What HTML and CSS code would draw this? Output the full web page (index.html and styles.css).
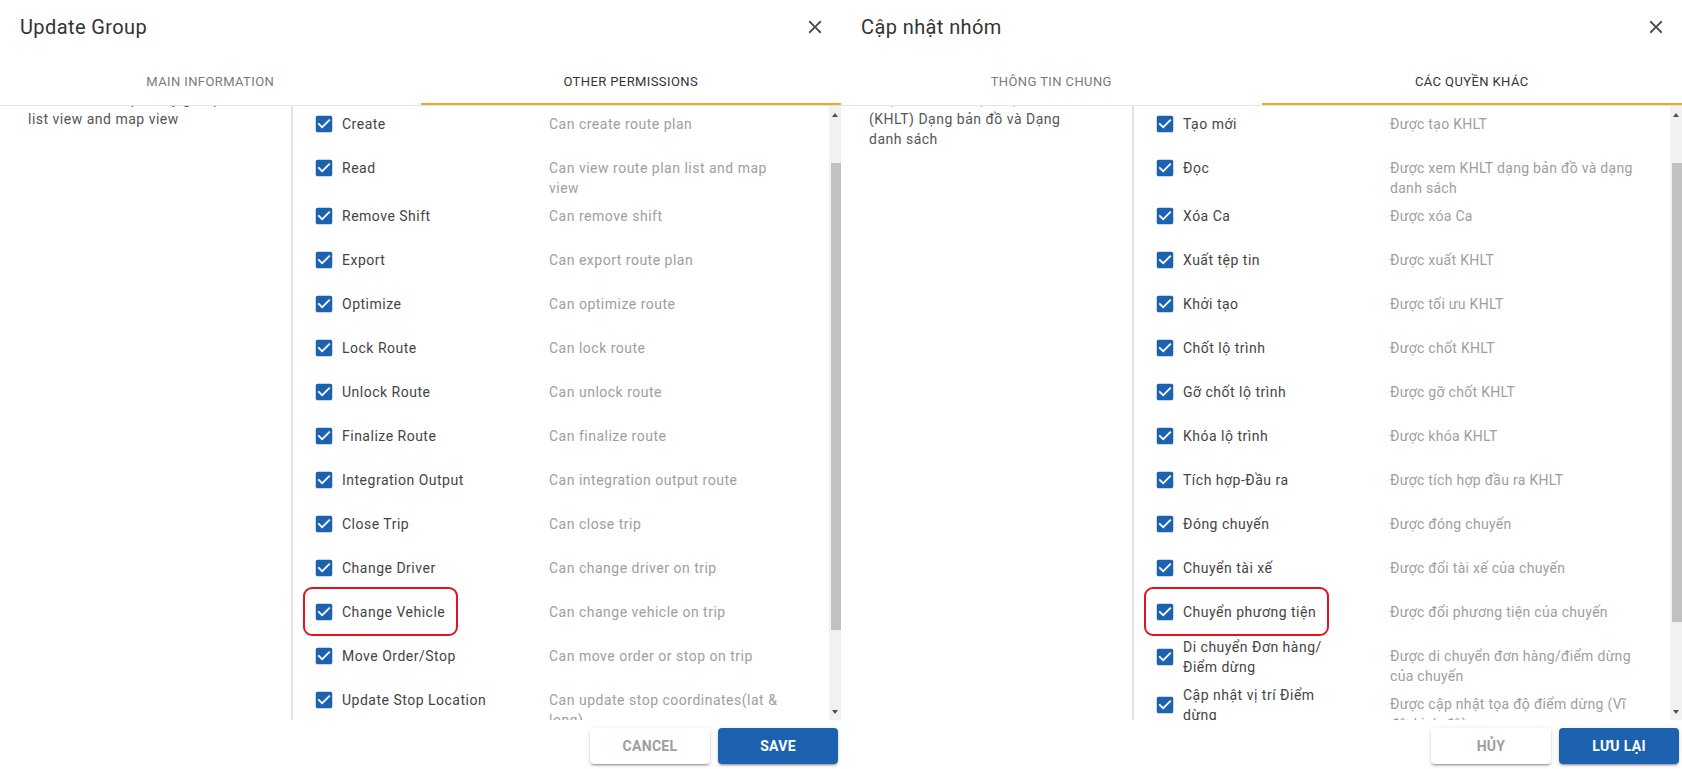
FILE: index.html
```html
<!DOCTYPE html>
<html lang="en">
<head>
<meta charset="utf-8">
<title>Update Group</title>
<link rel="stylesheet" href="styles.css">
</head>
<body>
<svg class="defs" width="0" height="0" aria-hidden="true">
  <symbol id="cb" viewBox="0 0 24 24"><path fill="currentColor" d="M19 3H5c-1.11 0-2 .9-2 2v14c0 1.1.89 2 2 2h14c1.11 0 2-.9 2-2V5c0-1.1-.89-2-2-2zm-9 14l-5-5 1.41-1.41L10 14.17l7.59-7.59L19 8l-9 9z"/></symbol>
  <symbol id="close" viewBox="0 0 24 24"><path fill="currentColor" d="M19 6.41 17.59 5 12 10.59 6.41 5 5 6.41 10.59 12 5 17.59 6.41 19 12 13.41 17.59 19 19 17.59 13.41 12z"/></symbol>
</svg>
<div class="screen">
  <section class="dialog">
    <header class="dialog-header">
      <h2 class="dialog-title">Update Group</h2>
      <button class="close-btn" type="button"><svg class="close-icon"><use href="#close"/></svg></button>
    </header>
    <nav class="tabs">
      <div class="tab">MAIN INFORMATION</div>
      <div class="tab tab--active">OTHER PERMISSIONS</div>
    </nav>
    <div class="dialog-body">
      <aside class="group-desc"><p>Can view route plan by group in list view and map view</p></aside>
      <div class="perm-list">
        <div class="perm-row"><div class="perm-label"><span class="check-label"><svg class="cb"><use href="#cb"/></svg><span class="perm-name">Create</span></span></div><div class="perm-desc">Can create route plan</div></div>
        <div class="perm-row"><div class="perm-label"><span class="check-label"><svg class="cb"><use href="#cb"/></svg><span class="perm-name">Read</span></span></div><div class="perm-desc">Can view route plan list and map view</div></div>
        <div class="perm-row"><div class="perm-label"><span class="check-label"><svg class="cb"><use href="#cb"/></svg><span class="perm-name">Remove Shift</span></span></div><div class="perm-desc">Can remove shift</div></div>
        <div class="perm-row"><div class="perm-label"><span class="check-label"><svg class="cb"><use href="#cb"/></svg><span class="perm-name">Export</span></span></div><div class="perm-desc">Can export route plan</div></div>
        <div class="perm-row"><div class="perm-label"><span class="check-label"><svg class="cb"><use href="#cb"/></svg><span class="perm-name">Optimize</span></span></div><div class="perm-desc">Can optimize route</div></div>
        <div class="perm-row"><div class="perm-label"><span class="check-label"><svg class="cb"><use href="#cb"/></svg><span class="perm-name">Lock Route</span></span></div><div class="perm-desc">Can lock route</div></div>
        <div class="perm-row"><div class="perm-label"><span class="check-label"><svg class="cb"><use href="#cb"/></svg><span class="perm-name">Unlock Route</span></span></div><div class="perm-desc">Can unlock route</div></div>
        <div class="perm-row"><div class="perm-label"><span class="check-label"><svg class="cb"><use href="#cb"/></svg><span class="perm-name">Finalize Route</span></span></div><div class="perm-desc">Can finalize route</div></div>
        <div class="perm-row"><div class="perm-label"><span class="check-label"><svg class="cb"><use href="#cb"/></svg><span class="perm-name">Integration Output</span></span></div><div class="perm-desc">Can integration output route</div></div>
        <div class="perm-row"><div class="perm-label"><span class="check-label"><svg class="cb"><use href="#cb"/></svg><span class="perm-name">Close Trip</span></span></div><div class="perm-desc">Can close trip</div></div>
        <div class="perm-row"><div class="perm-label"><span class="check-label"><svg class="cb"><use href="#cb"/></svg><span class="perm-name">Change Driver</span></span></div><div class="perm-desc">Can change driver on trip</div></div>
        <div class="perm-row"><div class="perm-label"><span class="check-label check-label--marked"><svg class="cb"><use href="#cb"/></svg><span class="perm-name">Change Vehicle</span></span></div><div class="perm-desc">Can change vehicle on trip</div></div>
        <div class="perm-row"><div class="perm-label"><span class="check-label"><svg class="cb"><use href="#cb"/></svg><span class="perm-name">Move Order/Stop</span></span></div><div class="perm-desc">Can move order or stop on trip</div></div>
        <div class="perm-row"><div class="perm-label"><span class="check-label"><svg class="cb"><use href="#cb"/></svg><span class="perm-name">Update Stop Location</span></span></div><div class="perm-desc">Can update stop coordinates(lat &amp; long)</div></div>
      </div>
      <div class="scrollbar">
        <div class="sb-arrow"><span class="tri tri--up"></span></div>
        <div class="sb-thumb"></div>
        <div class="sb-arrow sb-arrow--down"><span class="tri tri--down"></span></div>
      </div>
    </div>
    <footer class="dialog-actions">
      <button class="btn btn--cancel" type="button">CANCEL</button>
      <button class="btn btn--primary" type="button">SAVE</button>
    </footer>
  </section>

  <section class="dialog dialog--vi" lang="vi">
    <header class="dialog-header">
      <h2 class="dialog-title">Cập nhật nhóm</h2>
      <button class="close-btn" type="button"><svg class="close-icon"><use href="#close"/></svg></button>
    </header>
    <nav class="tabs">
      <div class="tab">THÔNG TIN CHUNG</div>
      <div class="tab tab--active">CÁC QUYỀN KHÁC</div>
    </nav>
    <div class="dialog-body">
      <aside class="group-desc"><p>Được xem Kế hoạch lộ trình (KHLT) Dạng bản đồ và Dạng danh sách</p></aside>
      <div class="perm-list">
        <div class="perm-row"><div class="perm-label"><span class="check-label"><svg class="cb"><use href="#cb"/></svg><span class="perm-name">Tạo mới</span></span></div><div class="perm-desc">Được tạo KHLT</div></div>
        <div class="perm-row"><div class="perm-label"><span class="check-label"><svg class="cb"><use href="#cb"/></svg><span class="perm-name">Đọc</span></span></div><div class="perm-desc">Được xem KHLT dạng bản đồ và dạng danh sách</div></div>
        <div class="perm-row"><div class="perm-label"><span class="check-label"><svg class="cb"><use href="#cb"/></svg><span class="perm-name">Xóa Ca</span></span></div><div class="perm-desc">Được xóa Ca</div></div>
        <div class="perm-row"><div class="perm-label"><span class="check-label"><svg class="cb"><use href="#cb"/></svg><span class="perm-name">Xuất tệp tin</span></span></div><div class="perm-desc">Được xuất KHLT</div></div>
        <div class="perm-row"><div class="perm-label"><span class="check-label"><svg class="cb"><use href="#cb"/></svg><span class="perm-name">Khởi tạo</span></span></div><div class="perm-desc">Được tối ưu KHLT</div></div>
        <div class="perm-row"><div class="perm-label"><span class="check-label"><svg class="cb"><use href="#cb"/></svg><span class="perm-name">Chốt lộ trình</span></span></div><div class="perm-desc">Được chốt KHLT</div></div>
        <div class="perm-row"><div class="perm-label"><span class="check-label"><svg class="cb"><use href="#cb"/></svg><span class="perm-name">Gỡ chốt lộ trình</span></span></div><div class="perm-desc">Được gỡ chốt KHLT</div></div>
        <div class="perm-row"><div class="perm-label"><span class="check-label"><svg class="cb"><use href="#cb"/></svg><span class="perm-name">Khóa lộ trình</span></span></div><div class="perm-desc">Được khóa KHLT</div></div>
        <div class="perm-row"><div class="perm-label"><span class="check-label"><svg class="cb"><use href="#cb"/></svg><span class="perm-name">Tích hợp-Đầu ra</span></span></div><div class="perm-desc">Được tích hợp đầu ra KHLT</div></div>
        <div class="perm-row"><div class="perm-label"><span class="check-label"><svg class="cb"><use href="#cb"/></svg><span class="perm-name">Đóng chuyến</span></span></div><div class="perm-desc">Được đóng chuyến</div></div>
        <div class="perm-row"><div class="perm-label"><span class="check-label"><svg class="cb"><use href="#cb"/></svg><span class="perm-name">Chuyển tài xế</span></span></div><div class="perm-desc">Được đổi tài xế của chuyến</div></div>
        <div class="perm-row"><div class="perm-label"><span class="check-label check-label--marked"><svg class="cb"><use href="#cb"/></svg><span class="perm-name">Chuyển phương tiện</span></span></div><div class="perm-desc">Được đổi phương tiện của chuyến</div></div>
        <div class="perm-row"><div class="perm-label"><span class="check-label"><svg class="cb"><use href="#cb"/></svg><span class="perm-name">Di chuyển Đơn hàng/ Điểm dừng</span></span></div><div class="perm-desc">Được di chuyển đơn hàng/điểm dừng của chuyến</div></div>
        <div class="perm-row"><div class="perm-label"><span class="check-label"><svg class="cb"><use href="#cb"/></svg><span class="perm-name">Cập nhật vị trí Điểm dừng</span></span></div><div class="perm-desc">Được cập nhật tọa độ điểm dừng (Vĩ độ, kinh độ)</div></div>
      </div>
      <div class="scrollbar">
        <div class="sb-arrow"><span class="tri tri--up"></span></div>
        <div class="sb-thumb sb-thumb--short"></div>
        <div class="sb-arrow sb-arrow--down"><span class="tri tri--down"></span></div>
      </div>
    </div>
    <footer class="dialog-actions">
      <button class="btn btn--cancel" type="button">HỦY</button>
      <button class="btn btn--primary" type="button">LƯU LẠI</button>
    </footer>
  </section>
</div>
</body>
</html>
```
FILE: styles.css
```css
* { box-sizing: border-box; }

html, body {
  margin: 0;
  padding: 0;
  background: #ffffff;
}

body {
  font-family: Roboto, "Noto Sans", "Liberation Sans", sans-serif;
  font-size: 14px;
  color: #333333;
}

.defs {
  position: absolute;
  width: 0;
  height: 0;
  overflow: hidden;
}

.screen {
  display: flex;
  width: 1682px;
  height: 769px;
  overflow: hidden;
}

.dialog {
  flex: none;
  width: 841px;
  height: 769px;
  display: flex;
  flex-direction: column;
  overflow: hidden;
  background: #ffffff;
}

/* header */
.dialog-header {
  flex: none;
  height: 57px;
  display: flex;
  align-items: flex-start;
  justify-content: space-between;
  padding: 15px 0 0 20px;
}

.dialog-title {
  margin: 0;
  font-size: 20px;
  font-weight: 400;
  line-height: 24px;
  letter-spacing: 0.4px;
  color: #333333;
}

.close-btn {
  border: 0;
  background: none;
  padding: 0;
  margin: 1px 15px 0 0;
  width: 22px;
  height: 22px;
  color: #4a4a4a;
  cursor: pointer;
}

.close-icon {
  display: block;
  width: 22px;
  height: 22px;
}

/* tabs */
.tabs {
  flex: none;
  display: flex;
  height: 49px;
  border-bottom: 1px solid #e4e4e4;
}

.tab {
  position: relative;
  flex: 1 1 0;
  display: flex;
  align-items: center;
  justify-content: center;
  font-size: 13px;
  font-weight: 400;
  letter-spacing: 0.4px;
  color: #7a7a7a;
}

.tab--active {
  color: #333333;
}

.tab--active::after {
  content: "";
  position: absolute;
  left: 0;
  right: 0;
  bottom: 0;
  height: 2px;
  background: #f5a623;
}

/* body */
.dialog-body {
  flex: none;
  height: 614px;
  display: flex;
  overflow: hidden;
}

.group-desc {
  flex: none;
  width: 293px;
  border-right: 2px solid #e4e4e4;
  padding: 0 44px 0 28px;
  overflow: hidden;
}

.group-desc p {
  margin: -17px 0 0;
  font-size: 14px;
  line-height: 20px;
  letter-spacing: 0.5px;
  color: #555555;
}

.perm-list {
  flex: 1 1 auto;
  min-width: 0;
  padding-left: 20px;
  margin-top: -4px;
}

.perm-row {
  display: flex;
  align-items: flex-start;
}

.perm-label {
  flex: none;
  width: 236px;
  min-height: 44px;
  padding: 3px 0;
  display: flex;
  align-items: center;
}

.check-label {
  position: relative;
  display: inline-flex;
  align-items: center;
  gap: 7px;
}

.check-label--marked::after {
  content: "";
  position: absolute;
  left: -10px;
  right: -13px;
  top: -14px;
  bottom: -13px;
  border: 2px solid #e3141c;
  border-radius: 9px;
}

.cb {
  flex: none;
  width: 22px;
  height: 22px;
  color: #1c62b0;
}

.perm-name {
  max-width: 148px;
  font-size: 14px;
  line-height: 20px;
  letter-spacing: 0.5px;
  color: #444444;
}

.perm-desc {
  flex: none;
  width: 236px;
  padding-top: 12px;
  margin-bottom: -4px;
  font-size: 14px;
  line-height: 20px;
  letter-spacing: 0.5px;
  color: #9e9e9e;
}

.dialog--vi .perm-desc {
  width: 250px;
  letter-spacing: 0.3px;
}

/* scrollbar */
.scrollbar {
  flex: none;
  width: 12px;
  background: #f1f1f1;
  display: flex;
  flex-direction: column;
}

.sb-arrow {
  flex: none;
  height: 17px;
  display: flex;
  align-items: center;
  justify-content: center;
}

.sb-arrow--down {
  margin-top: auto;
}

.tri {
  width: 0;
  height: 0;
  border-left: 3.5px solid transparent;
  border-right: 3.5px solid transparent;
}

.tri--up {
  border-bottom: 4px solid #505050;
}

.tri--down {
  border-top: 4px solid #505050;
}

.sb-thumb {
  flex: none;
  margin: 40px 0 0 2px;
  height: 467px;
  background: #c1c1c1;
}

.sb-thumb--short {
  height: 459px;
}

/* footer */
.dialog-actions {
  flex: none;
  display: flex;
  justify-content: flex-end;
  gap: 8px;
  padding: 8px 3px 0 0;
}

.btn {
  width: 120px;
  height: 36px;
  border: 0;
  border-radius: 4px;
  font-family: Roboto, "Noto Sans", sans-serif;
  font-size: 14px;
  font-weight: 700;
  letter-spacing: 0.3px;
  cursor: pointer;
  box-shadow: 0 3px 1px -2px rgba(0,0,0,0.2), 0 2px 2px 0 rgba(0,0,0,0.14), 0 1px 5px 0 rgba(0,0,0,0.12);
}

.btn--cancel {
  background: #ffffff;
  color: #9e9e9e;
}

.btn--primary {
  background: #1c62b0;
  color: #ffffff;
}
```
